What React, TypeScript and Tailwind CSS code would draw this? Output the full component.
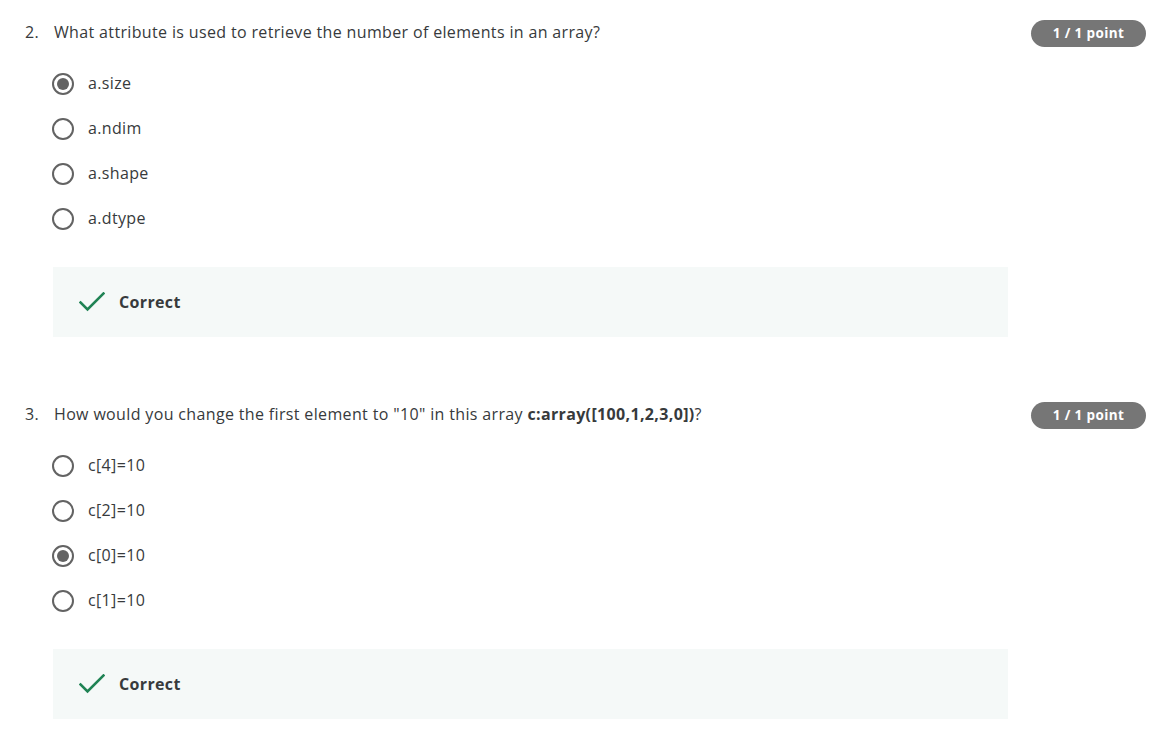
import React from 'react';

type Question = {
  num: string;
  text: React.ReactNode;
  options: string[];
  selected: number;
};

const questions: Question[] = [
  {
    num: '2.',
    text: 'What attribute is used to retrieve the number of elements in an array?',
    options: ['a.size', 'a.ndim', 'a.shape', 'a.dtype'],
    selected: 0,
  },
  {
    num: '3.',
    text: (
      <>
        How would you change the first element to "10" in this array{' '}
        <span className="font-bold">c:array([100,1,2,3,0])</span>?
      </>
    ),
    options: ['c[4]=10', 'c[2]=10', 'c[0]=10', 'c[1]=10'],
    selected: 2,
  },
];

function Radio({ checked }: { checked: boolean }) {
  return (
    <span className="w-[22px] h-[22px] rounded-full border-[2.5px] border-[#636363] flex items-center justify-center shrink-0">
      {checked && <span className="w-[12px] h-[12px] rounded-full bg-[#636363]" />}
    </span>
  );
}

function CheckIcon() {
  return (
    <svg width="26" height="20" viewBox="0 0 26 20" fill="none">
      <path d="M1.5 10.5 L8.5 17.5 L24.5 1.5" stroke="#1f8354" strokeWidth="2.6" strokeLinecap="square" />
    </svg>
  );
}

function QuestionBlock({ q, first }: { q: Question; first: boolean }) {
  return (
    <div className={first ? 'pt-[20px]' : 'mt-[65px]'}>
      <div className="flex items-center justify-between h-[27px] pr-[27px]">
        <div className="flex items-center text-[16px] tracking-[0.35px] text-[#373a3c] pb-[3px]">
          <span className="w-[30px] pl-[1px]">{q.num}</span>
          <span>{q.text}</span>
        </div>
        <span className="w-[115px] h-[27px] rounded-full bg-[#767676] text-white text-[13.5px] tracking-[0.4px] font-bold flex items-center justify-center">
          1 / 1 point
        </span>
      </div>
      <div className="mt-[14px] pl-[28px]">
        {q.options.map((o, i) => (
          <div key={o} className="h-[45px] flex items-center gap-[14px] text-[16px] tracking-[0.35px] text-[#373a3c]">
            <Radio checked={i === q.selected} />
            <span className="pb-[1px]">{o}</span>
          </div>
        ))}
      </div>
      <div className="mt-[26px] ml-[29px] w-[955px] h-[70px] bg-[#f5f9f8] flex items-center pl-[26px] gap-[14px]">
        <CheckIcon />
        <span className="text-[16px] tracking-[0.35px] font-bold text-[#373a3c]">Correct</span>
      </div>
    </div>
  );
}

export default function App() {
  return (
    <div
      className="w-[1173px] h-[738px] bg-white pl-[24px] overflow-hidden"
      style={{ fontFamily: '"Open Sans", "Noto Sans", sans-serif' }}
    >
      {questions.map((q, i) => (
        <QuestionBlock key={q.num} q={q} first={i === 0} />
      ))}
    </div>
  );
}
